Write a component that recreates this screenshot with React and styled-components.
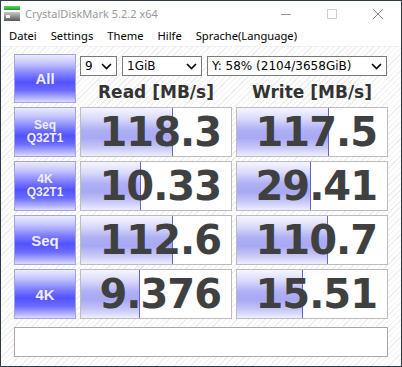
import React from "react";
import styled, { createGlobalStyle } from "styled-components";

const GlobalStyle = createGlobalStyle`
  html, body {
    margin: 0;
    padding: 0;
    background: #fff;
  }
  body {
    font-family: "Noto Sans", "DejaVu Sans", sans-serif;
  }
`;

const Window = styled.div`
  width: 402px;
  height: 367px;
  box-sizing: border-box;
  border: 1px solid #2e3c46;
  display: flex;
  flex-direction: column;
  background: #fff;
  overflow: hidden;
`;

const TitleBar = styled.div`
  height: 26px;
  flex-shrink: 0;
  display: flex;
  align-items: center;
  padding-left: 3px;
  box-sizing: border-box;
`;

const TitleText = styled.div`
  margin-left: 5px;
  padding-bottom: 2px;
  font-size: 11px;
  line-height: 15px;
  color: #999;
  flex: 1;
`;

const Controls = styled.div`
  display: flex;
  align-self: flex-start;
`;

const ControlButton = styled.div`
  width: 46px;
  height: 25px;
  display: flex;
  align-items: center;
  justify-content: center;
`;

const MenuBar = styled.div`
  height: 20px;
  flex-shrink: 0;
  box-sizing: border-box;
  display: flex;
  align-items: center;
  padding: 0 0 2px 1px;
  border-bottom: 1px solid #f0f0f0;
`;

const MenuItem = styled.div`
  padding: 0 7px;
  font-size: 11.2px;
  line-height: 18px;
  color: #000;
`;

const Client = styled.div`
  flex: 1;
  display: flex;
  flex-direction: column;
  gap: 4px;
  padding: 7px 13px 0;
  background: repeating-linear-gradient(
    135deg,
    #ffffff 0px,
    #ffffff 3px,
    #eeeeee 3px,
    #eeeeee 4px
  );
`;

const TopGrid = styled.div`
  display: grid;
  grid-template-columns: 62px 1fr;
  grid-template-rows: 22px 27px;
  column-gap: 4px;
`;

const TestButton = styled.div`
  grid-row: ${(p) => (p.$span ? "1 / span 2" : "auto")};
  box-sizing: border-box;
  border: 1px solid #a4a4e4;
  background: linear-gradient(
    to bottom,
    #ececff 0%,
    #c4c4ff 18%,
    #7a7aff 42%,
    #5252ff 58%,
    #6a6aff 75%,
    #b4b4ff 92%,
    #dcdcff 100%
  );
  display: flex;
  align-items: center;
  justify-content: center;
  text-align: center;
  font-family: "Liberation Sans", Arial, sans-serif;
  font-weight: bold;
  font-size: ${(p) => (p.$big ? "15px" : "12px")};
  line-height: 13px;
  color: #eeeeff;
`;

const SelectRow = styled.div`
  display: flex;
  gap: 5px;
  padding-top: 2px;
`;

const Select = styled.div`
  width: ${(p) => p.$w}px;
  height: 20px;
  box-sizing: border-box;
  border: 1px solid #7a7a7a;
  background: #fff;
  display: flex;
  align-items: center;
  justify-content: space-between;
  padding: 0 4px 0 4px;
  font-family: "DejaVu Sans", sans-serif;
  font-size: 12px;
  color: #000;
`;

const HeaderRow = styled.div`
  display: grid;
  grid-template-columns: 152px 152px;
  column-gap: 4px;
`;

const Header = styled.div`
  text-align: center;
  padding-top: 6px;
  font-family: "DejaVu Sans", sans-serif;
  font-weight: bold;
  font-size: 17px;
  line-height: 21px;
  color: #333;
`;

const Row = styled.div`
  display: grid;
  grid-template-columns: 62px 152px 152px;
  column-gap: 4px;
  height: 50px;
`;

const Cell = styled.div`
  position: relative;
  box-sizing: border-box;
  border: 1px solid #bcbcbc;
  background: #fff;
  overflow: hidden;
`;

const Bar = styled.div`
  position: absolute;
  left: 0;
  top: 0;
  bottom: 0;
  box-sizing: border-box;
  border-right: 1px solid #6464c8;
  background: linear-gradient(
    to bottom,
    #f6f6ff 0%,
    #dadafc 22%,
    #b0b0f6 45%,
    #a8a8f4 62%,
    #c6c6f8 82%,
    #eeeeff 100%
  );
`;

const Value = styled.div`
  position: relative;
  text-align: right;
  padding-right: 10px;
  font-family: "DejaVu Sans", sans-serif;
  font-weight: bold;
  font-size: 40px;
  letter-spacing: -1px;
  line-height: 48px;
  color: #404040;
`;

const Comment = styled.div`
  margin-top: 4px;
  height: 30px;
  box-sizing: border-box;
  border: 1px solid #a8a8a8;
  background: #fff;
`;

const AppIcon = () => (
  <svg width="16" height="16" viewBox="0 0 16 16">
    <defs>
      <linearGradient id="g" x1="0" y1="0" x2="0" y2="1">
        <stop offset="0" stopColor="#5ad85a" />
        <stop offset="1" stopColor="#1f9a2a" />
      </linearGradient>
      <linearGradient id="d" x1="0" y1="0" x2="0" y2="1">
        <stop offset="0" stopColor="#c8c8c8" />
        <stop offset="1" stopColor="#5a5a5a" />
      </linearGradient>
    </defs>
    <rect x="0" y="0" width="16" height="4" fill="url(#g)" />
    <rect x="0" y="6" width="16" height="9" fill="url(#d)" />
    <rect x="2" y="9" width="4" height="3" fill="#e8f8e8" />
  </svg>
);

const Chevron = () => (
  <svg width="11" height="7" viewBox="0 0 11 7">
    <polyline points="1,1 5.5,5.5 10,1" fill="none" stroke="#000" strokeWidth="1.6" />
  </svg>
);

const rows = [
  { label: ["Seq", "Q32T1"], read: "118.3", write: "117.5" },
  { label: ["4K", "Q32T1"], read: "10.33", write: "29.41" },
  { label: ["Seq"], read: "112.6", write: "110.7" },
  { label: ["4K"], read: "9.376", write: "15.51" },
];

// CrystalDiskMark draws the bar on a log scale
const barWidth = (v) => `${(Math.log10(parseFloat(v) * 10) / 5) * 100}%`;

const Result = ({ value }) => (
  <Cell>
    <Bar style={{ width: barWidth(value) }} />
    <Value>{value}</Value>
  </Cell>
);

export default function App() {
  return (
    <>
      <GlobalStyle />
      <Window>
        <TitleBar>
          <AppIcon />
          <TitleText>CrystalDiskMark 5.2.2 x64</TitleText>
          <Controls>
            <ControlButton>
              <svg width="10" height="10" viewBox="0 0 10 10">
                <line x1="0" y1="5.5" x2="10" y2="5.5" stroke="#999" strokeWidth="1" />
              </svg>
            </ControlButton>
            <ControlButton>
              <svg width="10" height="10" viewBox="0 0 10 10">
                <rect x="0.5" y="0.5" width="9" height="9" fill="none" stroke="#cfcfcf" strokeWidth="1" />
              </svg>
            </ControlButton>
            <ControlButton>
              <svg width="10" height="10" viewBox="0 0 10 10">
                <path d="M0 0 L10 10 M10 0 L0 10" stroke="#888" strokeWidth="1" />
              </svg>
            </ControlButton>
          </Controls>
        </TitleBar>
        <MenuBar>
          <MenuItem>Datei</MenuItem>
          <MenuItem>Settings</MenuItem>
          <MenuItem>Theme</MenuItem>
          <MenuItem>Hilfe</MenuItem>
          <MenuItem>Sprache(Language)</MenuItem>
        </MenuBar>
        <Client>
          <TopGrid>
            <TestButton $span $big>All</TestButton>
            <SelectRow>
              <Select $w={37}>
                <span>9</span>
                <Chevron />
              </Select>
              <Select $w={80}>
                <span>1GiB</span>
                <Chevron />
              </Select>
              <Select $w={180}>
                <span>Y: 58% (2104/3658GiB)</span>
                <Chevron />
              </Select>
            </SelectRow>
            <HeaderRow>
              <Header>Read [MB/s]</Header>
              <Header>Write [MB/s]</Header>
            </HeaderRow>
          </TopGrid>
          {rows.map((r) => (
            <Row key={r.label.join(" ")}>
              <TestButton $big={r.label.length === 1}>
                {r.label.map((l, i) => (
                  <React.Fragment key={l}>
                    {i > 0 && <br />}
                    {l}
                  </React.Fragment>
                ))}
              </TestButton>
              <Result value={r.read} />
              <Result value={r.write} />
            </Row>
          ))}
          <Comment />
        </Client>
      </Window>
    </>
  );
}
